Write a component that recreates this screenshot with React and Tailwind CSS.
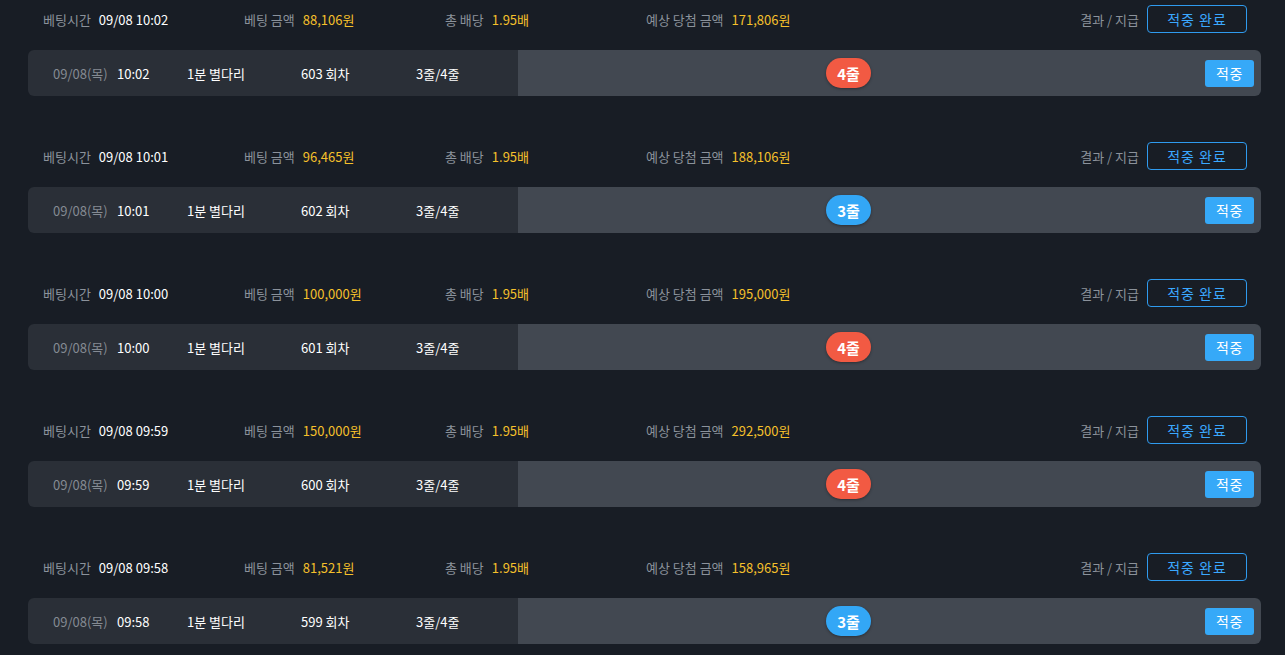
const bets = [
  { time: '10:02', amount: '88,106원', win: '171,806원', round: 603, result: 4 },
  { time: '10:01', amount: '96,465원', win: '188,106원', round: 602, result: 3 },
  { time: '10:00', amount: '100,000원', win: '195,000원', round: 601, result: 4 },
  { time: '09:59', amount: '150,000원', win: '292,500원', round: 600, result: 4 },
  { time: '09:58', amount: '81,521원', win: '158,965원', round: 599, result: 3 },
];

function Field({ label, value, accent }) {
  return (
    <div className="flex w-[201px] items-center gap-[8px]">
      <span className="text-[#8b929b]">{label}</span>
      <span className={accent ? 'text-[#f5c02b]' : 'text-white'}>{value}</span>
    </div>
  );
}

function BetRow({ bet }) {
  const red = bet.result === 4;
  return (
    <div className="mb-[41px]">
      {/* 상단 요약 */}
      <div className="flex h-[38px] items-center pl-[15px] pr-[14px]">
        <Field label="베팅시간" value={`09/08 ${bet.time}`} />
        <Field label="베팅 금액" value={bet.amount} accent />
        <Field label="총 배당" value="1.95배" accent />
        <Field label="예상 당첨 금액" value={bet.win} accent />
        <div className="ml-auto flex items-center gap-[8px]">
          <span className="text-[#8b929b]">결과 / 지급</span>
          <button className="h-[28px] w-[100px] rounded-[4px] border border-[#2f9bef] text-[14px] tracking-[1px] text-[#3ba8ff]">
            적중 완료
          </button>
        </div>
      </div>

      {/* 게임 정보 */}
      <div className="mt-[12px] flex h-[46px] overflow-hidden rounded-[6px]">
        <div className="flex w-[490px] items-center bg-[#2a2f37] pl-[25px]">
          <span className="w-[64px] text-[#858b93]">09/08(목)</span>
          <span className="w-[70px] text-white">{bet.time}</span>
          <span className="w-[114px] text-white">1분 별다리</span>
          <span className="w-[115px] text-white">{bet.round} 회차</span>
          <span className="text-white">3줄/4줄</span>
        </div>
        <div className="flex flex-1 items-center bg-[#424851] pl-[308px] pr-[7px]">
          <span
            className={`flex h-[30px] w-[45px] items-center justify-center rounded-full text-[15px] font-bold text-white shadow-[0_1px_3px_rgba(0,0,0,0.35)] ${
              red ? 'bg-[#f25a43]' : 'bg-[#33a7f6]'
            }`}
          >
            {bet.result}줄
          </span>
          <button className="ml-auto h-[27px] w-[49px] rounded-[3px] bg-[#36a9f8] text-[14px] tracking-[0.5px] text-white">
            적중
          </button>
        </div>
      </div>
    </div>
  );
}

export default function App() {
  return (
    <div
      className="min-h-screen bg-[#181d25] pl-[28px] pr-[24px] text-[13px] leading-none"
      style={{ fontFamily: '"Noto Sans CJK KR", "Noto Sans", sans-serif' }}
    >
      {bets.map((b) => (
        <BetRow key={b.round} bet={b} />
      ))}
    </div>
  );
}
